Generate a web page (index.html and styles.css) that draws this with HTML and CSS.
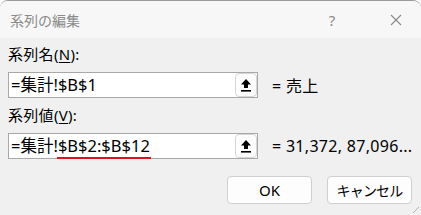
FILE: index.html
```html
<!DOCTYPE html>
<html lang="ja">
<head>
<meta charset="utf-8">
<link rel="stylesheet" href="styles.css">
</head>
<body>
<div class="win">
  <div class="titlebar">
    <span class="title">系列の編集</span>
    <span class="help">?</span>
    <span class="close">
      <svg width="12" height="12" viewBox="0 0 12 12"><path d="M1 1L11 11M11 1L1 11" stroke="#888" stroke-width="1.1" fill="none"/></svg>
    </span>
  </div>
  <div class="content">
    <div class="label">系列名(<u>N</u>):</div>
    <div class="row">
      <div class="box">
        <span class="val">=集計!$B$1</span>
        <span class="pick">
          <svg width="12" height="14" viewBox="0 0 12 14"><path d="M6 1L11 6.5H8V10H4V6.5H1Z" fill="#000"/><rect x="1" y="12" width="10" height="1.6" fill="#000"/></svg>
        </span>
      </div>
      <span class="result">= 売上</span>
    </div>
    <div class="label">系列値(<u>V</u>):</div>
    <div class="row">
      <div class="box">
        <span class="val">=集計!<span class="mark">$B$2:$B$12</span></span>
        <span class="pick">
          <svg width="12" height="14" viewBox="0 0 12 14"><path d="M6 1L11 6.5H8V10H4V6.5H1Z" fill="#000"/><rect x="1" y="12" width="10" height="1.6" fill="#000"/></svg>
        </span>
      </div>
      <span class="result">= 31,372, 87,096...</span>
    </div>
    <div class="buttons">
      <button class="btn">OK</button>
      <button class="btn jp">キャンセル</button>
    </div>
  </div>
  <div class="grip"></div>
</div>
</body>
</html>
```
FILE: styles.css
```css
html, body {
  margin: 0;
  padding: 0;
  background: #ffffff;
  width: 421px;
  height: 215px;
  overflow: hidden;
}
body {
  font-family: "Noto Sans", "Noto Sans CJK JP", sans-serif;
  color: #000;
}
.win {
  position: relative;
  width: 421px;
  height: 215px;
  box-sizing: border-box;
  background: #f0f0f0;
  border-top: 1px solid #9a9a9a;
  border-radius: 8px 8px 0 0;
  overflow: hidden;
}
.titlebar {
  height: 37px;
  background: #f7f7f7;
  display: flex;
  align-items: center;
  padding-left: 10px;
}
.title {
  font-size: 14px;
  color: #8a8a8a;
  font-family: "Noto Sans CJK JP", sans-serif;
  flex: 1;
}
.help {
  font-size: 15px;
  color: #8a8a8a;
  width: 20px;
  margin-right: 40px;
  text-align: center;
}
.close {
  width: 28px;
  display: flex;
  margin-right: 11px;
  justify-content: center;
}
.content {
  padding: 6px 0 0 8px;
}
.label {
  font-size: 15px;
  line-height: 20px;
  height: 20px;
  font-family: "Noto Sans", "Noto Sans CJK JP", sans-serif;
  letter-spacing: 0.3px;
}
.label u {
  text-underline-offset: 2px;
}
.row {
  display: flex;
  align-items: center;
  margin-top: 8px;
  margin-bottom: 7px;
}
.box {
  width: 250px;
  height: 26px;
  box-sizing: border-box;
  border: 1px solid #a8a8a8;
  background: #fff;
  display: flex;
  align-items: center;
  padding-left: 2px;
}
.val {
  flex: 1;
  font-size: 16.5px;
  line-height: 24px;
  white-space: nowrap;
  position: relative;
}
.mark {
  position: relative;
}
.mark::after {
  content: "";
  position: absolute;
  left: -1px;
  right: -1px;
  bottom: -2px;
  height: 2px;
  background: #e0101d;
}
.pick {
  width: 22px;
  height: 24px;
  box-sizing: border-box;
  border: 1px solid #d6d6d6;
  border-radius: 4px;
  background: #fdfdfd;
  display: flex;
  align-items: center;
  justify-content: center;
}
.result {
  margin-left: 14px;
  font-size: 16px;
  letter-spacing: 0.3px;
  white-space: nowrap;
}
.buttons {
  display: flex;
  justify-content: flex-end;
  gap: 15px;
  margin-top: 17px;
  padding-right: 9px;
}
.btn {
  width: 85px;
  height: 28px;
  box-sizing: border-box;
  border: 1px solid #d0d0d0;
  border-radius: 4px;
  background: #fdfdfd;
  font-family: "Noto Sans", "Noto Sans CJK JP", sans-serif;
  font-size: 15px;
  color: #000;
  padding: 0;
}
.btn.jp {
  font-size: 14px;
  letter-spacing: -0.8px;
}
.grip {
  position: absolute;
  right: 2px;
  bottom: 2px;
  width: 6px;
  height: 6px;
  background: linear-gradient(135deg, transparent 45%, #b0b0b0 45%, #b0b0b0 55%, transparent 55%);
}
```
